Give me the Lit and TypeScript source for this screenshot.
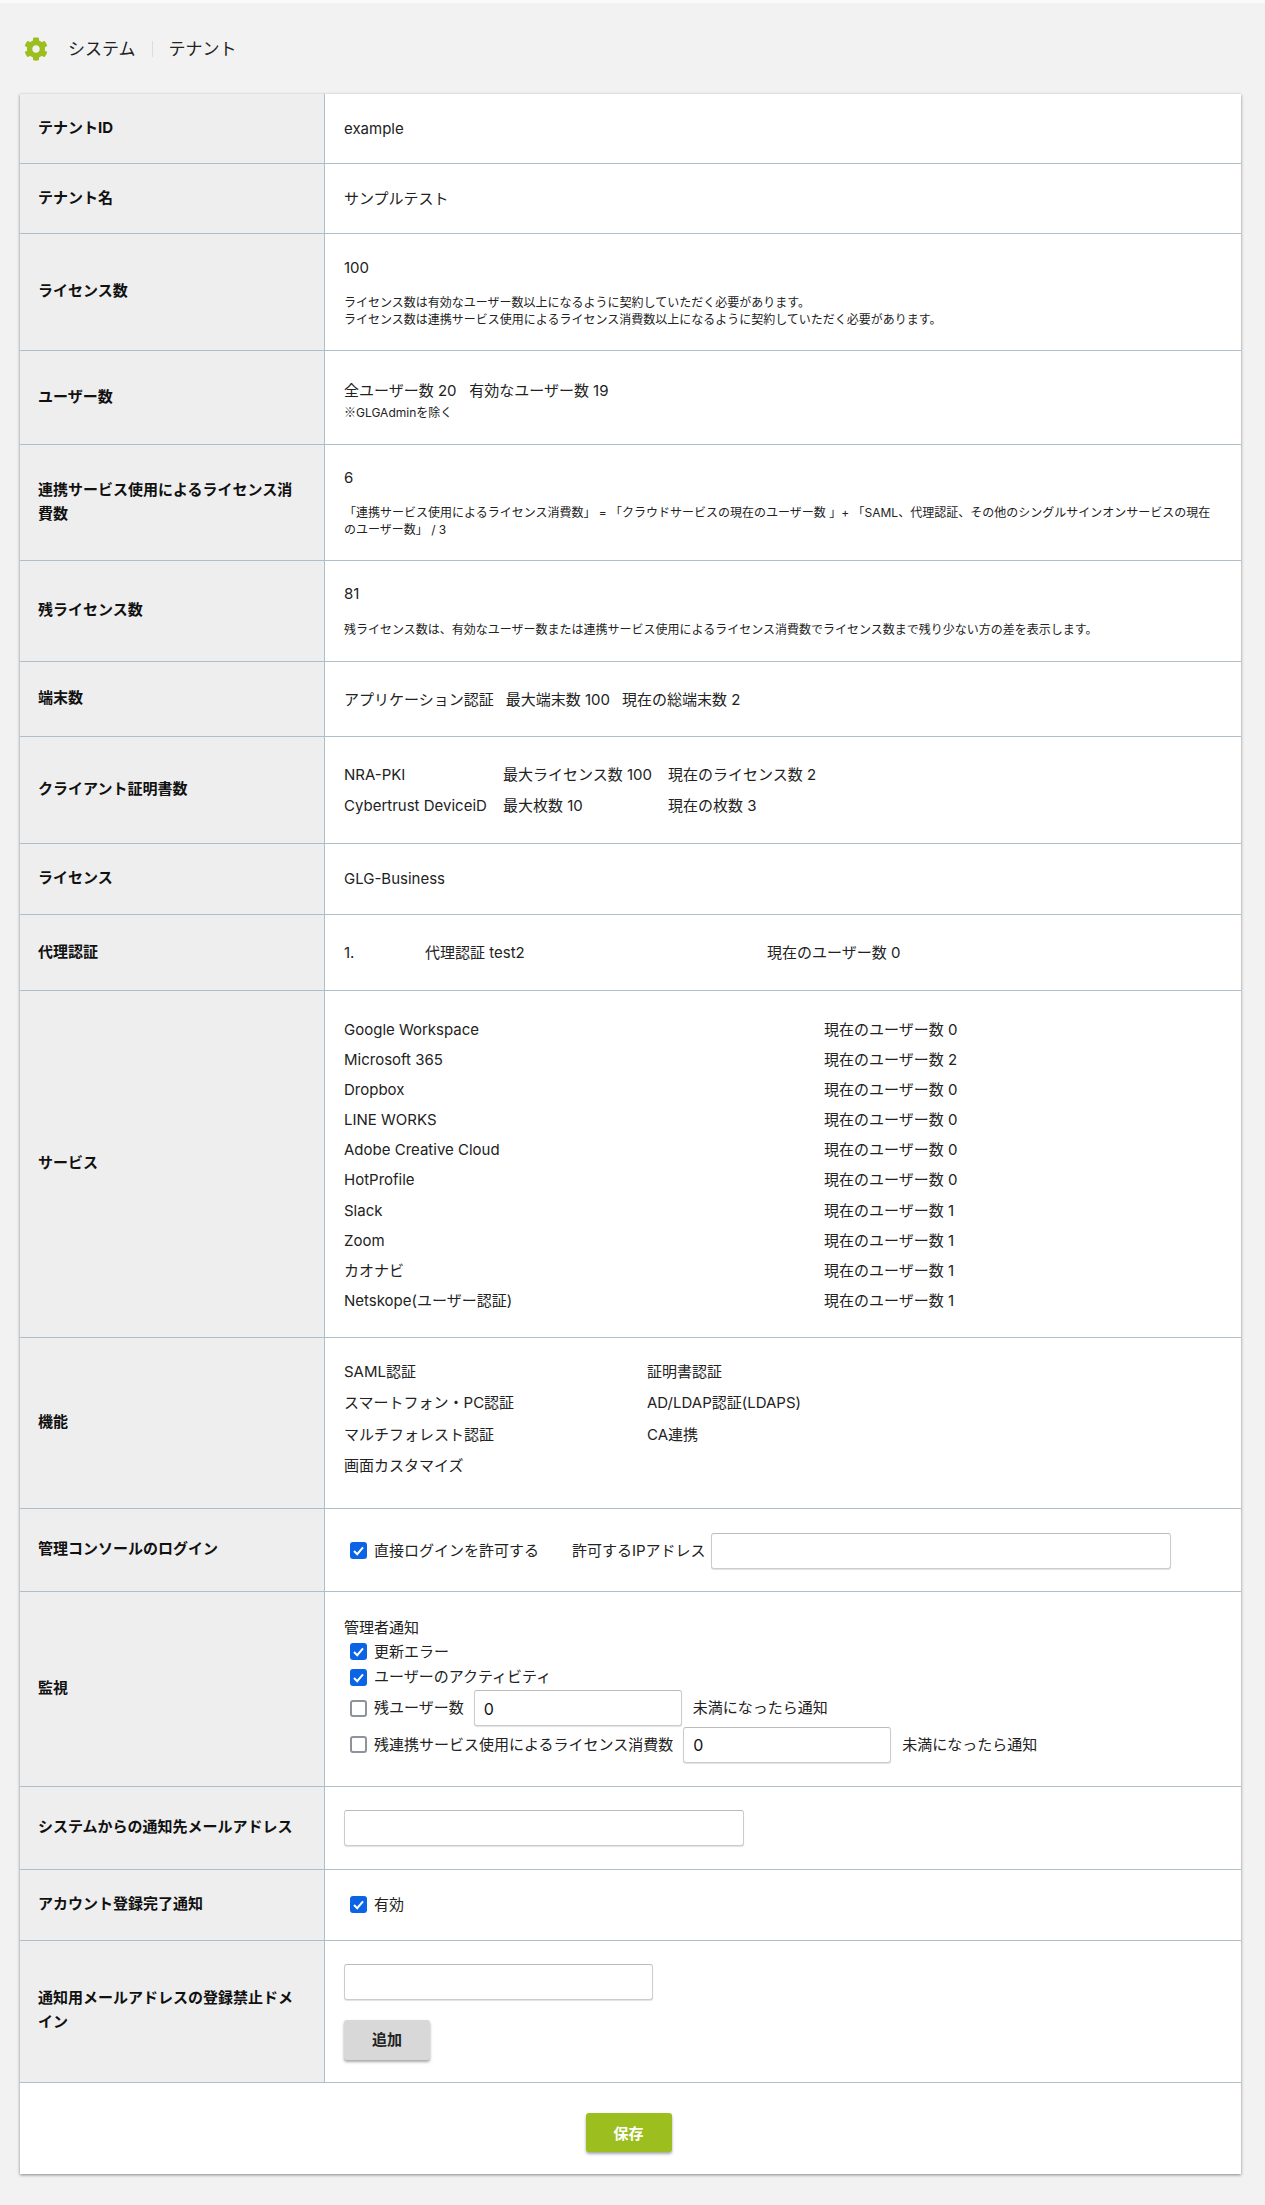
import { LitElement, html, css } from "lit";
import { customElement } from "lit/decorators.js";

const services: [string, number][] = [
  ["Google Workspace", 0],
  ["Microsoft 365", 2],
  ["Dropbox", 0],
  ["LINE WORKS", 0],
  ["Adobe Creative Cloud", 0],
  ["HotProfile", 0],
  ["Slack", 1],
  ["Zoom", 1],
  ["カオナビ", 1],
  ["Netskope(ユーザー認証)", 1],
];

const features: [string, string][] = [
  ["SAML認証", "証明書認証"],
  ["スマートフォン・PC認証", "AD/LDAP認証(LDAPS)"],
  ["マルチフォレスト認証", "CA連携"],
  ["画面カスタマイズ", ""],
];

@customElement("app-root")
export class AppRoot extends LitElement {
  static styles = css`
    :host {
      display: block;
      min-height: 2205px;
      box-sizing: border-box;
      padding-top: 3px;
      background: linear-gradient(#fafafa, #fafafa) top / 100% 3px no-repeat, #f2f2f2;
      font-family: Inter, "Noto Sans CJK JP", "Noto Sans", sans-serif;
      font-size: 15px;
      color: #222;
      text-spacing-trim: space-all;
    }
    * { box-sizing: border-box; }
    .cjk { font-family: "Noto Sans CJK JP", sans-serif; }
    .head {
      display: flex;
      align-items: center;
      height: 91px;
      padding-left: 24px;
      font-size: 17px;
      line-height: 24px;
    }
    .gear { width: 24px; height: 24px; fill: #9dbe1f; margin-right: 20px; }
    .sep { width: 1px; height: 16px; background: #dcdcdc; margin: 0 16px; }
    .card {
      width: 1221px;
      margin-left: 20px;
      background: #fff;
      box-shadow: 0 1px 3px rgba(0, 0, 0, 0.45);
    }
    .row {
      display: grid;
      grid-template-columns: 305px 1fr;
      border-bottom: 1px solid #aebfc9;
    }
    .label {
      display: flex;
      align-items: center;
      background: #eee;
      border-right: 1px solid #aebfc9;
      padding: 0 18px 2px 18px;
      font-weight: 700;
      line-height: 24px;
      color: #111;
    }
    .val { padding: 20px 19px 19px; line-height: 30px; min-width: 0; }
    .val.tall { padding-bottom: 20px; }
    .val.lic { padding: 19px 19px 22px; }
    .val.svcuse { padding: 18px 19px 22px; }
    .val.rest { padding: 18px 19px 23px; }
    .note { font-size: 12px; line-height: 17px; margin-top: 11px; }
    .note.one { margin-top: 12px; }
    .users { padding: 27px 19px 23px; }
    .users .line { line-height: 25px; }
    .users .note { margin-top: 0; }
    .devices { padding: 23px 19px 21px; display: flex; gap: 12px; }
    .certs {
      padding: 23px 19px 22px;
      display: grid;
      grid-template-columns: 159px 165px 1fr;
      row-gap: 1px;
    }
    .proxy {
      padding: 23px 19px 22px;
      display: grid;
      grid-template-columns: 81px 342px 1fr;
    }
    .svc {
      padding: 24px 19px 21px;
      display: grid;
      grid-template-columns: 480px 1fr;
      line-height: 30.1px;
    }
    .feat {
      padding: 18px 19px 26px;
      display: grid;
      grid-template-columns: 303px 1fr;
      line-height: 31.5px;
    }
    .check { display: inline-flex; align-items: center; padding-left: 6px; }
    .box {
      width: 17px;
      height: 17px;
      border-radius: 3px;
      margin-right: 7px;
      flex: none;
      border: 2px solid #8d929b;
      background: #fff;
    }
    .box.on { background: #0b63e5; border: none; }
    .box svg { display: block; width: 17px; height: 17px; }
    input {
      display: block;
      height: 36px;
      font: inherit;
      font-size: 16px;
      color: #111;
      border: 1px solid #ccc;
      border-top-color: #bbb;
      border-radius: 3px;
      background: #fff;
      padding: 1px 9px 0;
      outline: none;
      box-shadow: 0 1px 1px rgba(0, 0, 0, 0.12);
    }
    .login {
      padding: 24px 19px 22px;
      display: flex;
      align-items: center;
    }
    .login .ip { margin-left: 33px; margin-right: 5px; }
    .login input { width: 460px; }
    .mon { padding: 21px 19px 23px; }
    .mon .title { line-height: 30px; height: 26px; }
    .mon .c { height: 25.5px; display: flex; align-items: center; }
    .mon .f { height: 36.5px; display: flex; align-items: center; }
    .mon .f:first-of-type { margin-top: 1px; }
    .mon .f input { width: 208px; }
    .mon .f .check { margin-right: 10px; }
    .mon .after { margin-left: 11px; }
    .mail { padding: 23px 19px 23px; }
    .mail input { width: 400px; }
    .acct { padding: 20px 19px 20px; display: flex; align-items: center; }
    .dom { padding: 23px 19px 22px; }
    .dom input { width: 309px; }
    button {
      display: block;
      width: 86px;
      height: 40px;
      border: none;
      border-radius: 3px;
      font: inherit;
      font-weight: 700;
      box-shadow: 0 2px 3px rgba(0, 0, 0, 0.35);
    }
    .add { margin-top: 20px; background: #d8d8d8; color: #222; }
    .foot { height: 91px; padding: 30px 4px 0 0; }
    .save { margin: 0 auto; height: 39px; background: #9dbe1f; color: #fff; }
  `;

  private cb(on: boolean, label: string) {
    return html`<label class="check">
      <span class="box ${on ? "on" : ""}">
        ${on
          ? html`<svg viewBox="0 0 17 17"><path d="M4 9l3.2 3.2L13 5.4" fill="none" stroke="#fff" stroke-width="2"/></svg>`
          : ""}
      </span>
      ${label}
    </label>`;
  }

  render() {
    return html`
      <div class="head">
        <svg class="gear" viewBox="0 0 512 512"><path d="M487.4 315.7l-42.6-24.6c4.3-23.2 4.3-47 0-70.2l42.6-24.6c4.9-2.8 7.1-8.6 5.5-14-11.1-35.6-30-67.8-54.7-94.6-3.8-4.1-10-5.1-14.8-2.3L380.8 110c-17.9-15.4-38.5-27.3-60.8-35.1V25.8c0-5.6-3.9-10.5-9.4-11.7-36.7-8.2-74.3-7.8-109.2 0-5.5 1.2-9.4 6.1-9.4 11.7V75c-22.2 7.9-42.8 19.8-60.8 35.1L88.7 85.5c-4.9-2.8-11-1.9-14.8 2.3-24.7 26.7-43.6 58.9-54.7 94.6-1.7 5.4.6 11.2 5.5 14L67.3 221c-4.3 23.2-4.3 47 0 70.2l-42.6 24.6c-4.9 2.8-7.1 8.6-5.5 14 11.1 35.6 30 67.8 54.7 94.6 3.8 4.1 10 5.1 14.8 2.3l42.6-24.6c17.9 15.4 38.5 27.3 60.8 35.1v49.2c0 5.6 3.9 10.5 9.4 11.7 36.7 8.2 74.3 7.8 109.2 0 5.5-1.2 9.4-6.1 9.4-11.7v-49.2c22.2-7.9 42.8-19.8 60.8-35.1l42.6 24.6c4.9 2.8 11 1.9 14.8-2.3 24.7-26.7 43.6-58.9 54.7-94.6 1.5-5.5-.7-11.3-5.6-14.1zM256 336c-44.1 0-80-35.9-80-80s35.9-80 80-80 80 35.9 80 80-35.9 80-80 80z"/></svg>
        <span>システム</span><span class="sep"></span><span>テナント</span>
      </div>
      <div class="card">
        <div class="row"><div class="label">テナントID</div><div class="val">example</div></div>
        <div class="row"><div class="label">テナント名</div><div class="val">サンプルテスト</div></div>
        <div class="row">
          <div class="label">ライセンス数</div>
          <div class="val lic">100
            <div class="note">ライセンス数は有効なユーザー数以上になるように契約していただく必要があります。<br />ライセンス数は連携サービス使用によるライセンス消費数以上になるように契約していただく必要があります。</div>
          </div>
        </div>
        <div class="row">
          <div class="label">ユーザー数</div>
          <div class="val users">
            <div class="line">全ユーザー数 20 &nbsp; 有効なユーザー数 19</div>
            <div class="note"><span class="cjk">※</span>GLGAdminを除く</div>
          </div>
        </div>
        <div class="row">
          <div class="label">連携サービス使用によるライセンス消費数</div>
          <div class="val svcuse">6
            <div class="note">「連携サービス使用によるライセンス消費数」 = 「クラウドサービスの現在のユーザー数 」+ 「SAML、代理認証、その他のシングルサインオンサービスの現在のユーザー数」 / 3</div>
          </div>
        </div>
        <div class="row">
          <div class="label">残ライセンス数</div>
          <div class="val rest">81
            <div class="note one">残ライセンス数は、有効なユーザー数または連携サービス使用によるライセンス消費数でライセンス数まで残り少ない方の差を表示します。</div>
          </div>
        </div>
        <div class="row">
          <div class="label">端末数</div>
          <div class="val devices"><span>アプリケーション認証</span><span>最大端末数 100</span><span>現在の総端末数 2</span></div>
        </div>
        <div class="row">
          <div class="label">クライアント証明書数</div>
          <div class="val certs">
            <span>NRA-PKI</span><span>最大ライセンス数 100</span><span>現在のライセンス数 2</span>
            <span>Cybertrust DeviceiD</span><span>最大枚数 10</span><span>現在の枚数 3</span>
          </div>
        </div>
        <div class="row"><div class="label">ライセンス</div><div class="val tall">GLG-Business</div></div>
        <div class="row">
          <div class="label">代理認証</div>
          <div class="val proxy"><span>1.</span><span>代理認証 test2</span><span>現在のユーザー数 0</span></div>
        </div>
        <div class="row">
          <div class="label">サービス</div>
          <div class="val svc">
            ${services.map(([n, c]) => html`<span>${n}</span><span>現在のユーザー数 ${c}</span>`)}
          </div>
        </div>
        <div class="row">
          <div class="label">機能</div>
          <div class="val feat">
            ${features.map(([a, b]) => html`<span>${a}</span><span>${b}</span>`)}
          </div>
        </div>
        <div class="row">
          <div class="label">管理コンソールのログイン</div>
          <div class="val login">
            ${this.cb(true, "直接ログインを許可する")}
            <span class="ip">許可するIPアドレス</span><input type="text" />
          </div>
        </div>
        <div class="row">
          <div class="label">監視</div>
          <div class="val mon">
            <div class="title">管理者通知</div>
            <div class="c">${this.cb(true, "更新エラー")}</div>
            <div class="c">${this.cb(true, "ユーザーのアクティビティ")}</div>
            <div class="f">${this.cb(false, "残ユーザー数")}<input type="text" value="0" /><span class="after">未満になったら通知</span></div>
            <div class="f">${this.cb(false, "残連携サービス使用によるライセンス消費数")}<input type="text" value="0" /><span class="after">未満になったら通知</span></div>
          </div>
        </div>
        <div class="row">
          <div class="label">システムからの通知先メールアドレス</div>
          <div class="val mail"><input type="text" /></div>
        </div>
        <div class="row">
          <div class="label">アカウント登録完了通知</div>
          <div class="val acct">${this.cb(true, "有効")}</div>
        </div>
        <div class="row">
          <div class="label">通知用メールアドレスの登録禁止ドメイン</div>
          <div class="val dom"><input type="text" /><button class="add">追加</button></div>
        </div>
        <div class="foot"><button class="save">保存</button></div>
      </div>
    `;
  }
}
